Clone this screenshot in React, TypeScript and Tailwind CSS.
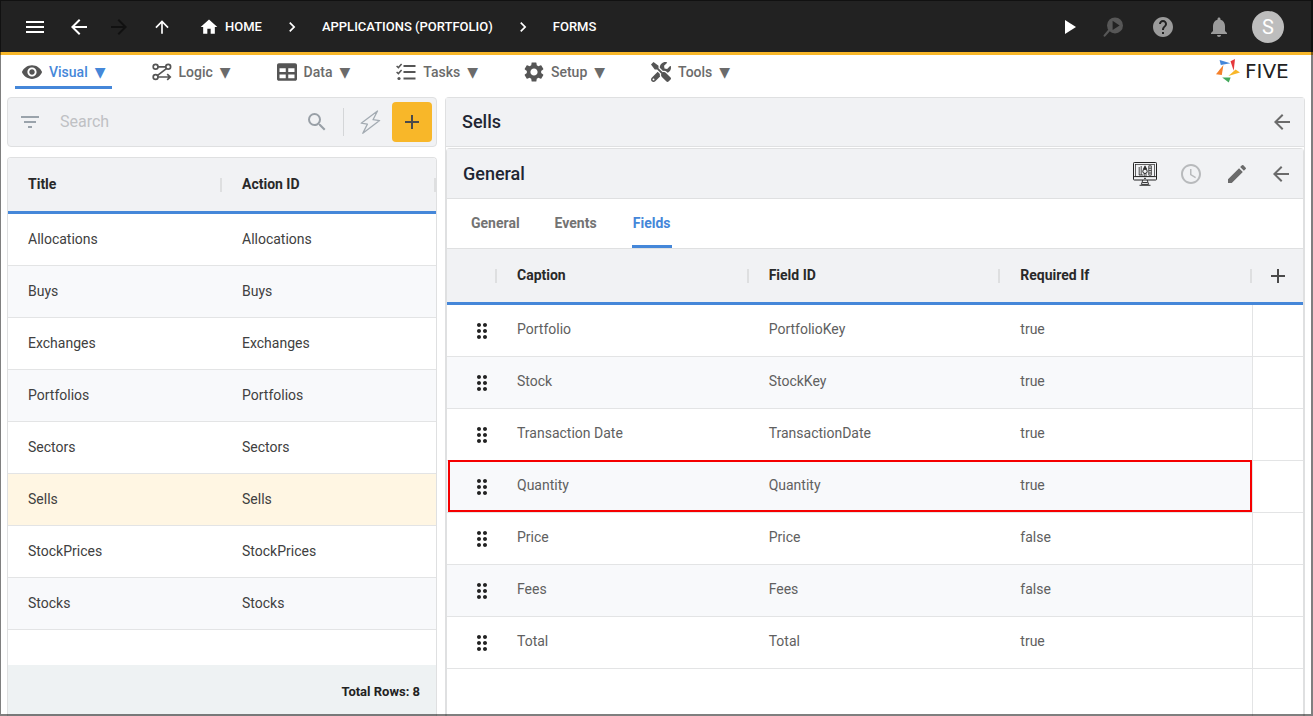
import { ReactNode, useState } from "react";
import clsx from "clsx";
import {
  MdAccessTime,
  MdAdd,
  MdArrowBack,
  MdArrowForward,
  MdArrowUpward,
  MdChevronRight,
  MdDragIndicator,
  MdEdit,
  MdFilterList,
  MdHelp,
  MdHome,
  MdMenu,
  MdNotifications,
  MdPlayArrow,
  MdSearch,
  MdSettings,
  MdVisibility,
} from "react-icons/md";
import { FaTable, FaTools } from "react-icons/fa";

const actions = [
  "Allocations",
  "Buys",
  "Exchanges",
  "Portfolios",
  "Sectors",
  "Sells",
  "StockPrices",
  "Stocks",
];

const fields = [
  { caption: "Portfolio", id: "PortfolioKey", required: "true" },
  { caption: "Stock", id: "StockKey", required: "true" },
  { caption: "Transaction Date", id: "TransactionDate", required: "true" },
  { caption: "Quantity", id: "Quantity", required: "true" },
  { caption: "Price", id: "Price", required: "false" },
  { caption: "Fees", id: "Fees", required: "false" },
  { caption: "Total", id: "Total", required: "true" },
];

function LogicIcon() {
  return (
    <svg viewBox="0 0 20 18" className="h-[18px] w-5" fill="none" stroke="currentColor" strokeWidth="1.7">
      <circle cx="3.6" cy="3.8" r="2.4" />
      <circle cx="16.2" cy="3.8" r="2.4" />
      <circle cx="3.6" cy="14" r="2.4" />
      <path d="M6 3.8h7.8M14.4 5.6 5.6 12.4M6 14h12M15.2 11.2 18.2 14l-3 2.8" />
    </svg>
  );
}

function TasksIcon() {
  return (
    <svg viewBox="0 0 20 18" className="h-[18px] w-5" fill="none" stroke="currentColor">
      <path d="M7.5 3H19.5M7.5 9H19.5M7.5 15.5H19.5" strokeWidth="2" />
      <path d="m.6 3 1.8 1.6L5.6 1M.6 9l1.8 1.6L5.6 7" strokeWidth="1.5" />
      <circle cx="3" cy="15.5" r="1.6" fill="currentColor" stroke="none" />
    </svg>
  );
}

function DebugIcon() {
  return (
    <svg viewBox="0 0 24 24" className="size-6">
      <path d="M8 15.5 3.6 20.6" stroke="currentColor" strokeWidth="2.2" strokeLinecap="round" />
      <circle cx="14" cy="10.4" r="8" fill="currentColor" />
      <path d="M11.6 5.8v9.2l7-4.6z" fill="#222222" />
    </svg>
  );
}

function BoltIcon() {
  return (
    <svg viewBox="0 0 24 24" className="size-6" fill="none" stroke="currentColor" strokeWidth="1.3" strokeLinejoin="round">
      <path d="M19.5 1 3.2 13.2l6.2.9L4.8 23.3 21.6 10.6l-6.6-.9z" />
    </svg>
  );
}

function MonitorIcon() {
  return (
    <svg viewBox="0 0 24 24" className="size-6" fill="none" stroke="#222222">
      <rect x=".5" y=".5" width="23" height="17.5" rx=".8" />
      <rect x="2.5" y="2.5" width="19" height="12" strokeWidth=".7" />
      <path d="M.5 14.6h23" strokeWidth=".9" />
      <path d="M6.2 5v8M8.2 4v9M6 13h4M15.8 3.8v9.4M18.3 3.8v9.4M15.8 3.8h2.5M15.8 6.2h2.5M15.8 8.6h2.5M15.8 11h2.5M15.8 13.2h2.5" strokeWidth=".8" />
      <path d="m12 3.8-1.7 3.4L12 6.8l1.8.4z" fill="#222222" strokeWidth=".6" />
      <circle cx="12" cy="9.3" r="2.2" />
      <path d="M11.2 11.5v3M13 11.5v3" strokeWidth=".8" />
      <circle cx="12" cy="16.3" r=".4" fill="#222222" />
      <path d="M9.8 18 8.4 22.4h7.2L14.2 18M9.3 20.5h5.4M6.5 23.3h11" strokeWidth=".9" />
    </svg>
  );
}

function Logo() {
  return (
    <a href="#home" className="flex items-center gap-[5px]" aria-label="Five">
      <svg viewBox="0 0 24 24" className="size-6">
        <path d="M3.6 1 14.4 4.2 4.8 6z" fill="#4587d9" />
        <path d="M19 0 14.5 2.2l3.2 9.6z" fill="#e5383b" />
        <path d="M7.4 6 0 15.2l5.8.8z" fill="#f5802a" />
        <path d="M24 13.4 19.6 10.6 12.4 17z" fill="#f8b729" />
        <path d="M6.2 18.4h8.4L12.8 23.6z" fill="#43a95c" />
      </svg>
      <span className="w-[58px] font-['DejaVu_Sans',sans-serif] text-[20px] leading-6 text-[#222222]">FIVE</span>
    </a>
  );
}

function IconButton({ label, className, children }: { label: string; className?: string; children: ReactNode }) {
  return (
    <button type="button" aria-label={label} className={clsx("flex shrink-0 items-center justify-center", className)}>
      {children}
    </button>
  );
}

function TopBar() {
  return (
    <header className="flex h-[55px] items-center border-b-[3px] border-[#f8b729] bg-[#222222] pt-0.5 pr-[29px] pl-[23px] text-white">
      <div className="flex items-center">
        <IconButton label="Menu"><MdMenu className="size-6" /></IconButton>
        <IconButton label="Back" className="ml-5"><MdArrowBack className="size-6" /></IconButton>
        <IconButton label="Forward" className="ml-4 text-[#111111]"><MdArrowForward className="size-6" /></IconButton>
        <IconButton label="Up" className="ml-[21px]"><MdArrowUpward className="size-5" /></IconButton>
      </div>
      <nav aria-label="Breadcrumb" className="ml-[27px] flex items-center gap-5 text-[13px] font-medium">
        <a href="#home" className="flex items-center gap-1.5">
          <MdHome className="size-5" />
          HOME
        </a>
        <MdChevronRight className="size-5" />
        <a href="#applications">APPLICATIONS (PORTFOLIO)</a>
        <MdChevronRight className="size-5" />
        <a href="#forms">FORMS</a>
      </nav>
      <div className="ml-auto flex items-center">
        <IconButton label="Run"><MdPlayArrow className="size-6" /></IconButton>
        <IconButton label="Inspect" className="ml-5 text-[#575757]"><DebugIcon /></IconButton>
        <IconButton label="Help" className="ml-[26px] text-[#9b9b9b]"><MdHelp className="size-6" /></IconButton>
        <IconButton label="Notifications" className="ml-8 text-[#9b9b9b]"><MdNotifications className="size-6" /></IconButton>
        <IconButton label="Account" className="ml-[21px] size-8 rounded-full bg-[#bdbdbd] text-xl">S</IconButton>
      </div>
    </header>
  );
}

const menus = [
  { label: "Visual", icon: <MdVisibility className="size-[22px]" /> },
  { label: "Logic", icon: <LogicIcon /> },
  { label: "Data", icon: <FaTable className="size-5" /> },
  { label: "Tasks", icon: <TasksIcon /> },
  { label: "Setup", icon: <MdSettings className="size-6 shrink-0" /> },
  { label: "Tools", icon: <FaTools className="size-5" /> },
];

function MenuBar() {
  const [active, setActive] = useState("Visual");

  return (
    <div className="flex h-[42px] items-start pr-[10px] pl-[15px]">
      <nav className="flex gap-[33px]">
        {menus.map(({ label, icon }) => (
          <button
            key={label}
            type="button"
            onClick={() => setActive(label)}
            className={clsx(
              "flex h-[34px] items-center gap-1.5 border-b-[3px] px-1.5 pt-0.5 text-sm font-medium",
              active === label ? "border-[#4587d9] text-[#4587d9]" : "border-transparent text-[#6b6b6b]"
            )}
          >
            <span className="flex w-[22px] justify-center text-[#555555]">{icon}</span>
            <span>{label}</span>
            <span className="ml-px font-['DejaVu_Sans',sans-serif] text-sm">▼</span>
          </button>
        ))}
      </nav>
      <div className="ml-auto pt-1">
        <Logo />
      </div>
    </div>
  );
}

function HeadCell({ children, className }: { children?: ReactNode; className?: string }) {
  return (
    <th className={clsx("border-b-[3px] border-[#4587d9] bg-[#f1f2f4] p-0 text-left font-bold", className)}>
      <div className="flex h-[14px] items-center border-r-2 border-[#dedfe0] pb-0.5 pl-5">{children}</div>
    </th>
  );
}

function ActionList() {
  const [selected, setSelected] = useState("Sells");

  return (
    <aside className="flex w-[430px] shrink-0 flex-col gap-[10px]">
      <div className="flex h-[50px] items-center rounded border border-[#dfe0e1] bg-[#f1f2f4] pr-1 pl-[10px]">
        <IconButton label="Filter" className="text-[#9aa3ab]"><MdFilterList className="size-6" /></IconButton>
        <input
          type="text"
          aria-label="Search"
          placeholder="Search"
          className="ml-[18px] min-w-0 flex-1 text-base outline-none placeholder:text-[#bfc1c4]"
        />
        <IconButton label="Search" className="text-[#99a0a7]"><MdSearch className="size-6" /></IconButton>
        <div className="ml-[14px] h-7 w-px bg-[#d4d6d8]" />
        <IconButton label="Quick actions" className="ml-[14px] text-[#a3abb2]"><BoltIcon /></IconButton>
        <button type="button" aria-label="Add" className="ml-[10px] flex size-10 items-center justify-center rounded bg-[#f8b729] text-[#4a4a4a]">
          <MdAdd className="size-6" />
        </button>
      </div>
      <div className="flex flex-1 flex-col overflow-hidden rounded-t border border-b-0 border-[#dfe0e1]">
        <table className="w-full table-fixed border-separate border-spacing-0 text-sm text-[#404040]">
          <thead>
            <tr className="h-14 text-[#292929]">
              <HeadCell>Title</HeadCell>
              <HeadCell>Action ID</HeadCell>
            </tr>
          </thead>
          <tbody>
            {actions.map((name) => (
              <tr
                key={name}
                onClick={() => setSelected(name)}
                className={clsx("h-[52px]", selected === name ? "bg-[#fff6e3]" : "even:bg-[#f8f9fb]")}
              >
                <td className="border-b border-[#e3e4e5] px-5 pt-0 pb-0.5">{name}</td>
                <td className="border-b border-[#e3e4e5] px-5 pt-0 pb-0.5">{name}</td>
              </tr>
            ))}
          </tbody>
        </table>
        <div className="mt-auto flex h-[51px] items-center justify-end bg-[#eef2f3] pt-0.5 pr-4 text-[13px] font-bold text-[#222222]">
          Total Rows: {actions.length}
        </div>
      </div>
    </aside>
  );
}

function FieldTable() {
  return (
    <>
      <table className="w-full table-fixed border-separate border-spacing-0 text-sm text-[#606060]">
        <thead>
          <tr className="h-14 text-[#292929]">
            <HeadCell className="w-[50px]" />
            <HeadCell>Caption</HeadCell>
            <HeadCell>Field ID</HeadCell>
            <HeadCell>Required If</HeadCell>
            <th className="w-[51px] border-b-[3px] border-[#4587d9] bg-[#f1f2f4] p-0">
              <IconButton label="Add field" className="w-full text-[#4a4a4a]"><MdAdd className="size-6" /></IconButton>
            </th>
          </tr>
        </thead>
        <tbody>
          {fields.map((field) => (
            <tr key={field.id} className="relative h-[52px] even:bg-[#f8f9fb]">
              <td className="border-b border-[#e3e4e5] py-0 pr-0 pl-[23px]">
                <MdDragIndicator className="size-6 text-[#222222]" />
                {field.id === "Quantity" && (
                  <span className="pointer-events-none absolute -top-px right-[51px] bottom-px left-px border-2 border-[#f50000]" />
                )}
              </td>
              <td className="border-b border-[#e3e4e5] px-5 pt-0 pb-1">{field.caption}</td>
              <td className="border-b border-[#e3e4e5] px-5 pt-0 pb-1">{field.id}</td>
              <td className="border-b border-[#e3e4e5] px-5 pt-0 pb-1">{field.required}</td>
              <td className="border-b border-l border-[#e3e4e5] bg-white p-0" />
            </tr>
          ))}
        </tbody>
      </table>
      <div className="flex flex-1 justify-end">
        <div className="w-[51px] border-l border-[#e3e4e5]" />
      </div>
    </>
  );
}

function FormPanel() {
  const [tab, setTab] = useState("Fields");

  return (
    <main className="flex min-w-0 flex-1 flex-col rounded-t border border-b-0 border-[#dfe0e1]">
      <div className="flex h-[49px] items-center justify-between border-b border-[#dfe0e1] bg-[#f1f2f4] pr-[10px] pl-4">
        <h1 className="text-lg font-medium text-[#1f2633]">Sells</h1>
        <IconButton label="Close form" className="text-[#6b6b6b]"><MdArrowBack className="size-6" /></IconButton>
      </div>
      <section className="mt-px flex flex-1 flex-col rounded-t border border-b-0 border-[#dfe0e1]">
        <div className="flex h-[50px] items-center border-b border-[#dfe0e1] bg-[#f1f2f4] pr-[10px] pl-4">
          <h2 className="text-lg font-medium text-[#1f2633]">General</h2>
          <div className="ml-auto flex items-center gap-[22px] text-[#6b6b6b]">
            <IconButton label="Preview"><MonitorIcon /></IconButton>
            <IconButton label="History" className="text-[#b8babc]"><MdAccessTime className="size-6" /></IconButton>
            <IconButton label="Edit"><MdEdit className="size-6" /></IconButton>
          </div>
          <IconButton label="Back" className="ml-5 text-[#6b6b6b]"><MdArrowBack className="size-6" /></IconButton>
        </div>
        <div role="tablist" className="flex h-[50px] gap-[35px] border-b border-[#dfe0e1] px-6">
          {["General", "Events", "Fields"].map((name) => (
            <button
              key={name}
              type="button"
              role="tab"
              aria-selected={tab === name}
              onClick={() => setTab(name)}
              className={clsx(
                "min-w-10 border-b-[3px] pt-0.5 text-sm font-bold",
                tab === name ? "border-[#4587d9] text-[#4587d9]" : "border-transparent text-[#737373]"
              )}
            >
              {name}
            </button>
          ))}
        </div>
        <FieldTable />
      </section>
    </main>
  );
}

export default function App() {
  return (
    <div className="relative flex min-h-screen flex-col bg-white font-[Roboto,sans-serif]">
      <TopBar />
      <MenuBar />
      <div className="flex flex-1 gap-2 pr-2 pl-[7px]">
        <ActionList />
        <FormPanel />
      </div>
      {/* window frame */}
      <div className="pointer-events-none absolute inset-0 border-t border-r-2 border-b-2 border-l border-black/50" />
    </div>
  );
}
